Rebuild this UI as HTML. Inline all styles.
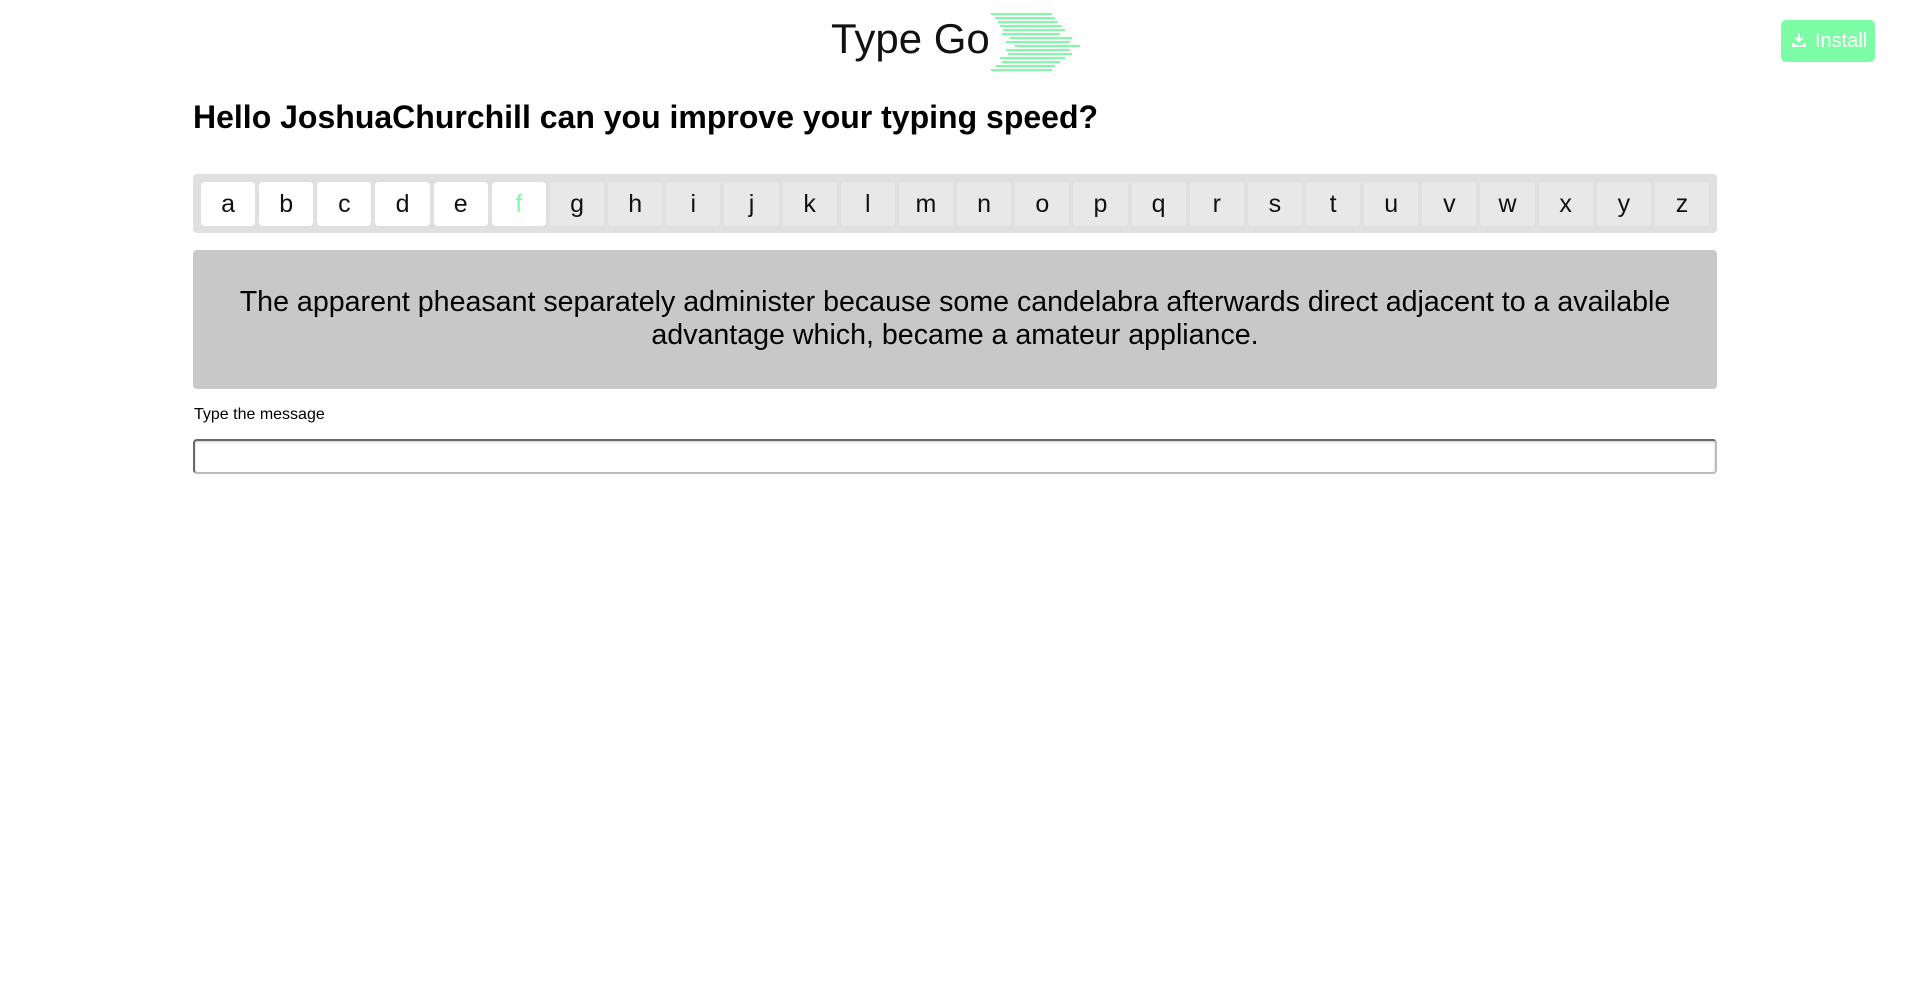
<!DOCTYPE html>
<html><head><meta charset="utf-8"><style>
*{box-sizing:border-box;margin:0;padding:0}
body{width:1910px;height:993px;background:#fff;font-family:"Liberation Sans",Arial,sans-serif;position:relative;overflow:hidden}
.logo{position:absolute;left:831px;top:13px;font-size:42px;color:#111;line-height:52px}
.lines{position:absolute;left:990px;top:12px}
.install{position:absolute;left:1781px;top:20px;width:94px;height:42px;background:#7dfca6;border-radius:5px;color:#fff;font-size:20px;line-height:42px;padding-left:34px}
.install svg{position:absolute;left:10px;top:12px}
h1{position:absolute;left:193px;top:97px;font-size:32px;font-weight:bold;line-height:40px}
.kb{position:absolute;left:193px;top:174px;width:1524px;height:59px;background:#e0e0e0;border-radius:4px;padding:8px;display:flex;gap:4px}
.k{width:54.2px;height:44px;background:#e8e8e8;border-radius:4px;font-size:25px;text-align:center;line-height:44px;color:#111}
.k.w{background:#fff}
.msg{position:absolute;left:193px;top:250px;width:1524px;height:139px;background:#c8c8c8;border-radius:4px;text-align:center;font-size:28.6px;line-height:33px;padding:36px 30px 0}
.lbl{position:absolute;left:194px;top:406px;font-size:16px}
.inp{position:absolute;left:193px;top:439px;width:1524px;height:35px;border:2px inset #bbb;border-radius:4px;box-shadow:inset 0 1px 2px rgba(0,0,0,.2)}
</style></head><body>
<div class="logo">Type Go</div>
<svg class="lines" width="95" height="60" stroke="#7dfca6" stroke-width="2">
<line x1="1" y1="2" x2="62" y2="2"/><line x1="5" y1="6" x2="65" y2="6"/><line x1="8" y1="10" x2="68" y2="10"/><line x1="10" y1="14" x2="72" y2="14"/><line x1="13" y1="18" x2="75" y2="18"/><line x1="12" y1="22" x2="70" y2="22"/><line x1="20" y1="26" x2="82" y2="26"/><line x1="16" y1="30" x2="80" y2="30"/><line x1="25" y1="34" x2="90" y2="34"/><line x1="16" y1="38" x2="80" y2="38"/><line x1="18" y1="42" x2="82" y2="42"/><line x1="10" y1="46" x2="75" y2="46"/><line x1="12" y1="50" x2="70" y2="50"/><line x1="6" y1="54" x2="65" y2="54"/><line x1="1" y1="58" x2="62" y2="58"/>
</svg>
<div class="install"><svg width="16" height="16" viewBox="0 0 16 16" fill="#fff"><rect x="7" y="1" width="2" height="8"/><path d="M3.5 6 L8 10.5 L12.5 6 L11 5 L8 8 L5 5Z"/><path d="M1 11h3v2h8v-2h3v4H1z"/></svg>Install</div>
<h1>Hello JoshuaChurchill can you improve your typing speed?</h1>
<div class="kb">
<div class="k w">a</div><div class="k w">b</div><div class="k w">c</div><div class="k w">d</div><div class="k w">e</div><div class="k w" style="color:#7dfca6">f</div><div class="k">g</div><div class="k">h</div><div class="k">i</div><div class="k">j</div><div class="k">k</div><div class="k">l</div><div class="k">m</div><div class="k">n</div><div class="k">o</div><div class="k">p</div><div class="k">q</div><div class="k">r</div><div class="k">s</div><div class="k">t</div><div class="k">u</div><div class="k">v</div><div class="k">w</div><div class="k">x</div><div class="k">y</div><div class="k">z</div>
</div>
<div class="msg">The apparent pheasant separately administer because some candelabra afterwards direct adjacent to a available advantage which, became a amateur appliance.</div>
<div class="lbl">Type the message</div>
<div class="inp"></div>
</body></html>
